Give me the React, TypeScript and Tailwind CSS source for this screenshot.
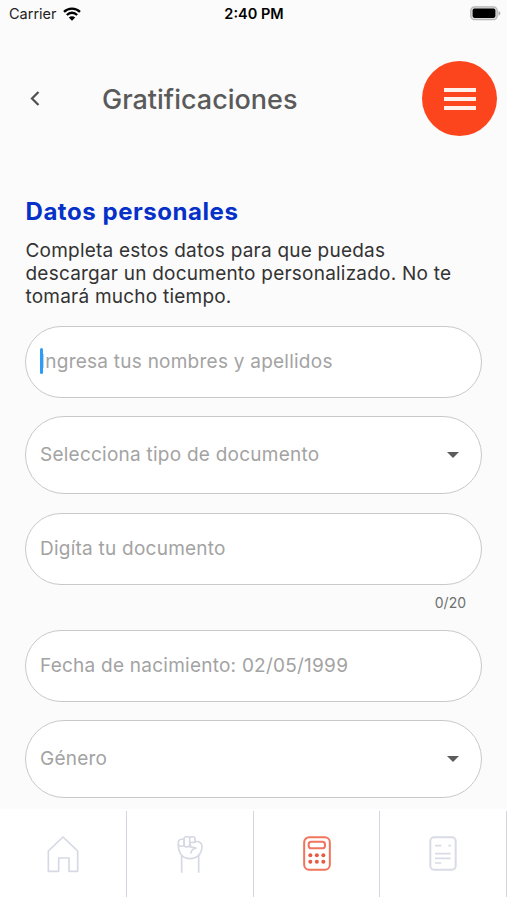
import type { ReactNode } from "react";

function WifiIcon() {
  return (
    <svg width="18" height="14" viewBox="0 0 54 42" fill="none" stroke="#000" strokeWidth="7">
      <path d="M3 14.5C16 1.5 38 1.5 51 14.5" />
      <path d="M11.5 24C20.5 15 33.5 15 42.5 24" />
      <path d="M17.5 31.5C23 26 31 26 36.5 31.5L27 41Z" fill="#000" stroke="none" />
    </svg>
  );
}

function BatteryIcon() {
  return (
    <svg width="31" height="15" viewBox="0 0 31 15">
      <rect x="0.8" y="0.8" width="26.4" height="12.9" rx="3.8" fill="#ddd" stroke="#b5b5b5" strokeWidth="1.3" />
      <rect x="2.6" y="2.6" width="22.8" height="9.3" rx="1.8" fill="#000" />
      <path d="M28.5 5c2.4 .8 2.4 3.8 0 4.6z" fill="#a8a8a8" />
    </svg>
  );
}

function HomeIcon() {
  return (
    <svg width="32" height="38" viewBox="0 0 96 114" fill="none" stroke="#d5d9e3" strokeWidth="5">
      <path d="M4 45L48 3L92 45V106H66V66H35V106H4Z" strokeLinejoin="round" />
    </svg>
  );
}

function FistIcon() {
  return (
    <svg
      width="26"
      height="38"
      viewBox="0 0 78 114"
      fill="none"
      stroke="#d5d9e3"
      strokeWidth="5"
      strokeLinecap="round"
      strokeLinejoin="round"
    >
      <path d="M14 58V110M65 58V110" strokeLinecap="butt" />
      <path d="M4 18C4 10 10 9 21 9V29C14 32 8 31 4 26Z" />
      <path d="M21 7C22 1 36 1 38 5V28C36 34 25 34 22 30Z" />
      <path d="M38 5C42 1 54 1 54 7V19H42C38 19 38 26 41 29" />
      <path d="M54 17C66 15 75 21 75 31C75 52 62 68 38 68C18 68 4 53 4 26" />
      <path d="M38 32C44 34 50 34 57 36C49 38 43 43 42 51" />
    </svg>
  );
}

function CalculatorIcon() {
  return (
    <svg className="ml-px" width="28" height="35" viewBox="0 0 84 105" fill="none" stroke="#f1745c" strokeWidth="6">
      <rect x="3.5" y="4" width="77" height="97" rx="15" />
      <rect x="17" y="17" width="49" height="20" rx="8" />
      <g fill="#e85b42" stroke="none">
        <circle cx="22" cy="58" r="6" />
        <circle cx="41.5" cy="58" r="6" />
        <circle cx="61" cy="58" r="6" />
        <circle cx="22" cy="77" r="6" />
        <circle cx="41.5" cy="77" r="6" />
        <circle cx="61" cy="77" r="6" />
      </g>
    </svg>
  );
}

function DocumentIcon() {
  return (
    <svg width="28" height="35" viewBox="0 0 84 105" fill="none" stroke="#d9dbe5" strokeWidth="6">
      <rect x="4" y="4" width="76" height="97" rx="11" />
      <path d="M18 29H37M58 29H66M18 53H65M18 67H65M18 81H37" strokeWidth="5" />
    </svg>
  );
}

function Field({ label, focused }: { label: string; focused?: boolean }) {
  return (
    <div className="flex h-[72px] items-center rounded-full border border-[#c9c9c9] bg-white pl-[14px]">
      {focused && <span className="relative z-10 -mt-[3px] -mr-[3px] h-[26px] w-[3px] rounded-full bg-[#2e9bf5]" />}
      <span className="text-[19px] tracking-[0.24px] text-[#a3a3a3]">{label}</span>
    </div>
  );
}

function SelectField({ label }: { label: string }) {
  return (
    <div className="flex h-[78px] items-center justify-between rounded-full border border-[#c9c9c9] bg-white pl-[14px] pr-[22px]">
      <span className="text-[19px] tracking-[0.24px] text-[#a3a3a3]">{label}</span>
      <svg className="mb-px" width="12" height="6" viewBox="0 0 12 6">
        <path d="M0 0H12L6 6Z" fill="#5c5c5c" />
      </svg>
    </div>
  );
}

function Tab({ children }: { children: ReactNode }) {
  return (
    <div className="flex h-[86px] w-[126.6px] shrink-0 justify-center border-r border-[#d3d6e2] pt-[25px]">
      {children}
    </div>
  );
}

export default function App() {
  return (
    <div className="flex h-[900px] w-[507px] flex-col overflow-hidden bg-[#fbfbfb] font-['Inter','Liberation_Sans',sans-serif]">
      <header className="grid h-[28px] grid-cols-3 items-center pl-[9px] pr-[8px]">
        <div className="flex items-center gap-[6px] text-[14.5px] text-[#222]">
          Carrier
          <WifiIcon />
        </div>
        <div className="pb-px text-center text-[14.5px] font-semibold text-black">2:40 PM</div>
        <div className="-mr-[2px] flex justify-end pb-px">
          <BatteryIcon />
        </div>
      </header>

      <div className="mt-[33px] flex h-[75px] items-center pr-[10px]">
        <svg className="ml-[30px]" width="10" height="15" viewBox="0 0 10 15" fill="none" stroke="#505050" strokeWidth="2.2">
          <path d="M8.5 1L2 7.5L8.5 14" />
        </svg>
        <h1 className="ml-[62px] pt-[3px] text-[27px] font-medium text-[#5a5a5a]">Gratificaciones</h1>
        <button className="ml-auto flex size-[75px] flex-col items-center justify-center gap-[5px] rounded-full bg-[#fd451d]">
          <span className="h-[4px] w-[32px] bg-[#fff0ec]" />
          <span className="h-[4px] w-[32px] bg-[#fff0ec]" />
          <span className="h-[4px] w-[32px] bg-[#fff0ec]" />
        </button>
      </div>

      <main className="flex h-[673px] shrink-0 flex-col px-[25px] pt-[60px]">
        <h2 className="pl-[0.5px] text-[24px] leading-[32px] font-bold tracking-[0.55px] text-[#0631c9]">
          Datos personales
        </h2>
        <p className="mt-[11px] pl-[0.5px] text-[19px] leading-[23px] tracking-[0.22px] text-[#333]">
          Completa estos datos para que puedas
          <br />
          descargar un documento personalizado. No te
          <br />
          tomará mucho tiempo.
        </p>
        <form className="mt-[18px] flex flex-col">
          <Field label="Ingresa tus nombres y apellidos" focused />
          <div className="mt-[18px]">
            <SelectField label="Selecciona tipo de documento" />
          </div>
          <div className="mt-[19px]">
            <Field label="Digíta tu documento" />
          </div>
          <div className="flex h-[45px] justify-end pt-[8px] pr-[16px] text-[14px] leading-[20px] text-[#6f6f6f]">0/20</div>
          <Field label="Fecha de nacimiento: 02/05/1999" />
          <div className="mt-[18px]">
            <SelectField label="Género" />
          </div>
        </form>
      </main>

      <nav className="flex h-[91px] shrink-0 bg-white pt-[2px] pl-[0.5px]">
        <Tab>
          <HomeIcon />
        </Tab>
        <Tab>
          <FistIcon />
        </Tab>
        <Tab>
          <CalculatorIcon />
        </Tab>
        <Tab>
          <DocumentIcon />
        </Tab>
      </nav>
    </div>
  );
}
